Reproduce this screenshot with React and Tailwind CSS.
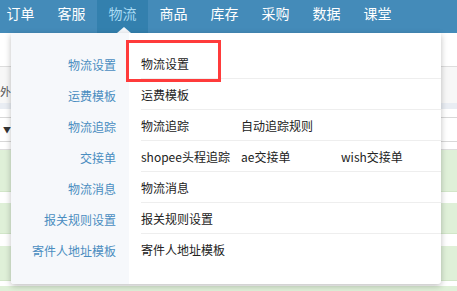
import React from "react";

const navItems = ["订单", "客服", "物流", "商品", "库存", "采购", "数据", "课堂"];

const menuRows = [
  { label: "物流设置", links: ["物流设置"] },
  { label: "运费模板", links: ["运费模板"] },
  { label: "物流追踪", links: ["物流追踪", "自动追踪规则"] },
  { label: "交接单", links: ["shopee头程追踪", "ae交接单", "wish交接单"] },
  { label: "物流消息", links: ["物流消息"] },
  { label: "报关规则设置", links: ["报关规则设置"] },
  { label: "寄件人地址模板", links: ["寄件人地址模板"] },
];

export default function App() {
  return (
    <div
      className="relative w-[457px] h-[291px] overflow-hidden bg-white text-[12px]"
      style={{ fontFamily: '"Noto Sans CJK SC", "Noto Sans", sans-serif' }}
    >
      {/* Top nav */}
      <div className="h-[33px] bg-[#448bb9] flex -ml-[5px]">
        {navItems.map((item) => (
          <div
            key={item}
            className={
              item === "物流"
                ? "w-[51px] h-[33px] text-center text-[14px] leading-[27px] bg-[#3380ae] text-[#a9dbf4]"
                : "w-[51px] h-[33px] text-center text-[14px] leading-[27px] text-white"
            }
          >
            {item}
          </div>
        ))}
      </div>

      {/* Page content behind the menu */}
      <div className="h-[33px]" />
      <div className="h-[37px] border-t border-[#dddddd] bg-[#f7f7f7] flex items-end pb-[5px]">
        <span className="text-[11px] leading-[14px] text-[#555]">外</span>
      </div>
      <div className="h-[6px] bg-[#e9edf3]" />
      <div className="h-[8px]" />
      <div className="h-[25px] border-y border-[#d8d8d8] flex items-center pl-[3px] text-[#333] text-[8px]">
        ▼
      </div>
      <div className="h-[8px] border-b border-[#dddddd]" />
      <div className="h-[42px] bg-[#dff0d8] border-b border-[#d2e6c9]" />
      <div className="h-[11px]" />
      <div className="h-[31px] bg-[#dff0d8] border-b border-[#d2e6c9]" />
      <div className="h-[12px]" />
      <div className="h-[35px] bg-[#dff0d8] border-b border-[#d2e6c9]" />
      <div className="h-[5px]" />
      <div className="h-[10px] bg-[#dff0d8]" />

      {/* Caret */}
      <div className="absolute left-[117px] top-[27px] w-0 h-0 border-x-[7px] border-b-[6px] border-x-transparent border-b-[#f6f8fb]" />

      {/* Dropdown menu */}
      <div className="absolute left-[11px] top-[33px] w-[430px] h-[251px] bg-white flex shadow-[0_2px_6px_rgba(0,0,0,0.25)] rounded-b-[3px] overflow-hidden">
        <div className="w-[120px] bg-[#f6f8fb] pt-[16px]">
          {menuRows.map((row) => (
            <div
              key={row.label}
              className="h-[31px] leading-[31px] text-right pr-[13px] text-[#4a8dc0]"
            >
              {row.label}
            </div>
          ))}
        </div>
        <div className="flex-1 pt-[15px] pl-[12px]">
          {menuRows.map((row, i) => (
            <div
              key={row.label}
              className={
                i === menuRows.length - 1
                  ? "h-[31px] flex items-center pt-[1px] text-[#222]"
                  : "h-[31px] flex items-center pt-[1px] border-b border-[#eeeeee] text-[#222]"
              }
            >
              {row.links.map((link) => (
                <span key={link} className="w-[100px] whitespace-nowrap">
                  {link}
                </span>
              ))}
            </div>
          ))}
        </div>
      </div>

      {/* Highlight annotation */}
      <div className="absolute left-[126px] top-[40px] w-[95px] h-[42px] border-[3px] border-[#ff3b3b]" />
    </div>
  );
}
